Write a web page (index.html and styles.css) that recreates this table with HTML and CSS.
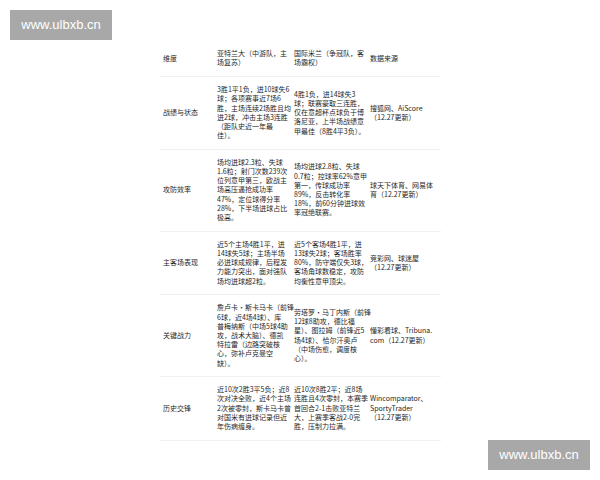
FILE: index.html
```html
<!DOCTYPE html>
<html lang="zh-CN">
<head>
<meta charset="utf-8">
<title>亚特兰大 vs 国际米兰</title>
<link rel="stylesheet" href="styles.css">
</head>
<body>
<div class="page">
  <table class="compare">
    <colgroup>
      <col class="c-dim"><col class="c-home"><col class="c-away"><col class="c-src">
    </colgroup>
    <tr>
      <td>维度</td>
      <td>亚特兰大（中游队，主<br>场复苏）</td>
      <td>国际米兰（争冠队，客<br>场霸权）</td>
      <td>数据来源</td>
    </tr>
    <tr>
      <td>战绩与状态</td>
      <td>3胜1平1负，进10球失6<br>球；各项赛事近7场6<br>胜，主场连续2场胜且均<br>进2球，冲击主场3连胜<br>（距队史近一年最<br>佳）。</td>
      <td>4胜1负，进14球失3<br>球；联赛豪取三连胜，<br>仅在意超杯点球负于博<br>洛尼亚，上半场战绩意<br>甲最佳（8胜4平3负）。</td>
      <td>搜狐网、AiScore<br>（12.27更新）</td>
    </tr>
    <tr>
      <td>攻防效率</td>
      <td>场均进球2.3粒、失球<br>1.6粒；射门次数239次<br>位列意甲第三，欧战主<br>场高压逼抢成功率<br>47%，定位球得分率<br>28%，下半场进球占比<br>极高。</td>
      <td>场均进球2.8粒、失球<br>0.7粒；控球率62%意甲<br>第一，传球成功率<br>89%，反击转化率<br>18%，前60分钟进球效<br>率冠绝联赛。</td>
      <td>球天下体育、网易体<br>育（12.27更新）</td>
    </tr>
    <tr>
      <td>主客场表现</td>
      <td>近5个主场4胜1平，进<br>14球失5球；主场半场<br>必进球成规律，后程发<br>力能力突出，面对强队<br>场均进球超2粒。</td>
      <td>近5个客场4胜1平，进<br>13球失2球；客场胜率<br>80%，防守端仅失3球，<br>客场角球数稳定，攻防<br>均衡性意甲顶尖。</td>
      <td>竞彩网、球迷屋<br>（12.27更新）</td>
    </tr>
    <tr>
      <td>关键战力</td>
      <td>詹卢卡·斯卡马卡（前锋<br>6球，近4场4球）、库<br>普梅纳斯（中场5球4助<br>攻，战术大脑）、德凯<br>特拉雷（边路突破核<br>心，弥补卢克曼空<br>缺）。</td>
      <td>劳塔罗·马丁内斯（前锋<br>12球8助攻，德比福<br>星）、图拉姆（前锋近5<br>场4球）、恰尔汗奥卢<br>（中场伤愈，调度核<br>心）。</td>
      <td>懂彩看球、Tribuna.<br>com（12.27更新）</td>
    </tr>
    <tr>
      <td>历史交锋</td>
      <td>近10次2胜3平5负；近8<br>次对决全败，近4个主场<br>2次被零封，斯卡马卡曾<br>对国米有进球记录但近<br>年伤病缠身。</td>
      <td>近10次8胜2平；近8场<br>连胜且4次零封，本赛季<br>首回合2-1击败亚特兰<br>大，上赛季客战2-0完<br>胜，压制力拉满。</td>
      <td>Wincomparator、<br>SportyTrader<br>（12.27更新）</td>
    </tr>
  </table>
</div>
<div class="mark mark-top">www.ulbxb.cn</div>
<div class="mark mark-bottom">www.ulbxb.cn</div>
</body>
</html>
```

FILE: styles.css
```css
html, body {
  margin: 0;
  padding: 0;
  background: #ffffff;
}

.page {
  width: 600px;
  height: 480px;
  padding: 41px 0 0 160px;
  box-sizing: border-box;
}

.compare {
  border-collapse: collapse;
  table-layout: fixed;
  width: 281px;
  font-family: "Noto Sans CJK SC", "Noto Sans", sans-serif;
  font-size: 7px;
  line-height: 9.2px;
  color: #1f1f1f;
}

.c-dim { width: 54px; }
.c-home { width: 77px; }
.c-away { width: 76px; }
.c-src { width: 74px; }

.compare td {
  padding: 8.25px 1px 8.25px 3px;
  vertical-align: middle;
  white-space: nowrap;
  border-bottom: 1px solid #f1f1f1;
}

.mark {
  position: absolute;
  width: 102px;
  height: 30px;
  background: #a8a8a8;
  color: #ffffff;
  font-family: "Liberation Sans", Arial, sans-serif;
  font-size: 13px;
  line-height: 30px;
  text-align: center;
}

.mark-top {
  left: 10px;
  top: 10px;
}

.mark-bottom {
  left: 488px;
  top: 440px;
}
```
